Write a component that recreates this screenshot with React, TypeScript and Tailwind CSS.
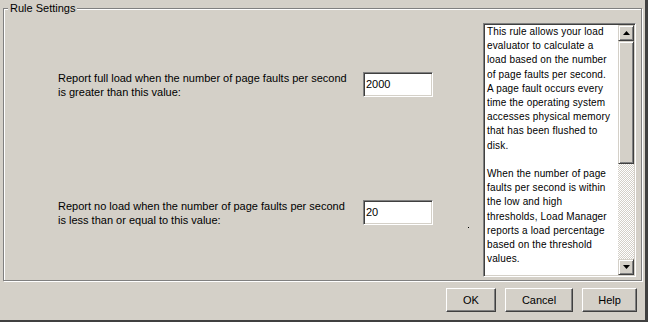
import React from "react";

const helpLines1 = [
  "This rule allows your load",
  "evaluator to calculate a",
  "load based on the number",
  "of page faults per second.",
  "A page fault occurs every",
  "time the operating system",
  "accesses physical memory",
  "that has been flushed to",
  "disk.",
];
const helpLines2 = [
  "When the number of page",
  "faults per second is within",
  "the low and high",
  "thresholds, Load Manager",
  "reports a load percentage",
  "based on the threshold",
  "values.",
];

function ScrollBtn({ up }: { up: boolean }) {
  return (
    <div className="w-[16px] h-[16px] bg-[#d4d0c8] border border-t-[#d4d0c8] border-l-[#d4d0c8] border-r-[#404040] border-b-[#404040] shadow-[inset_1px_1px_0_#fff,inset_-1px_-1px_0_#808080] flex items-center justify-center shrink-0">
      <svg width="7" height="4" viewBox="0 0 7 4">
        {up ? (
          <polygon points="3.5,0 7,4 0,4" fill="#000" />
        ) : (
          <polygon points="0,0 7,0 3.5,4" fill="#000" />
        )}
      </svg>
    </div>
  );
}

function Row({ lines, value, mt }: { lines: string[]; value: string; mt: string }) {
  return (
    <div className={`flex items-center h-[25px] ${mt}`}>
      <div className="w-[359px] pl-[54px] text-[11px] leading-[14px] text-black whitespace-nowrap">
        {lines[0]}
        <br />
        {lines[1]}
      </div>
      <div className="w-[70px] h-[25px] bg-white border border-t-[#808080] border-l-[#808080] border-r-white border-b-white shadow-[inset_1px_1px_0_#404040,inset_-1px_-1px_0_#d4d0c8] flex items-center pl-[2px] text-[11px] text-black">
        {value}
      </div>
    </div>
  );
}

function Btn({ label, w }: { label: string; w: string }) {
  return (
    <div className={`${w} h-[24px] bg-[#d4d0c8] border border-t-white border-l-white border-r-[#404040] border-b-[#404040] shadow-[inset_-1px_-1px_0_#808080] flex items-center justify-center text-[11px] text-black`}>
      {label}
    </div>
  );
}

export default function App() {
  return (
    <div className="w-[648px] h-[322px] bg-[#d4d0c8] border-r-[3px] border-b-2 border-r-[#404040] border-b-[#404040] font-['Liberation_Sans',Arial,sans-serif] flex flex-col relative overflow-hidden">
      <div className="ml-[3px] mt-[8px] w-[639px] h-[273px] border border-[#808080] shadow-[inset_1px_1px_0_#fff,1px_1px_0_#fff] relative flex">
        <span className="absolute left-[4px] top-[-7px] px-[2px] bg-[#d4d0c8] text-[11px] leading-[13px] text-black">
          Rule Settings
        </span>
        <div className="flex-1 flex flex-col">
          <Row
            mt="mt-[63px]"
            value="2000"
            lines={[
              "Report full load when the number of page faults per second",
              "is greater than this value:",
            ]}
          />
          <Row
            mt="mt-[103px]"
            value="20"
            lines={[
              "Report no load when the number of page faults per second",
              "is less than or equal to this value:",
            ]}
          />
        </div>
        <div className="mt-[14px] mr-[5px] w-[153px] h-[254px] bg-white border border-t-[#808080] border-l-[#808080] border-r-white border-b-white shadow-[inset_1px_1px_0_#404040,inset_-1px_-1px_0_#d4d0c8] p-[1px] flex">
          <div className="flex-1 pl-[2px] text-[10px] leading-[14.2px] tracking-[0.15px] text-black whitespace-nowrap overflow-hidden">
            {helpLines1.map((l) => (
              <div key={l}>{l}</div>
            ))}
            <div>&nbsp;</div>
            {helpLines2.map((l) => (
              <div key={l}>{l}</div>
            ))}
          </div>
          <div className="w-[16px] flex flex-col">
            <ScrollBtn up />
            <div className="h-[123px] bg-[#d4d0c8] border border-t-[#d4d0c8] border-l-[#d4d0c8] border-r-[#404040] border-b-[#404040] shadow-[inset_1px_1px_0_#fff,inset_-1px_-1px_0_#808080] shrink-0" />
            <div className="flex-1 bg-[repeating-conic-gradient(#d4d0c8_0_25%,#ffffff_0_50%)] bg-[length:2px_2px]" />
            <ScrollBtn up={false} />
          </div>
        </div>
        <span className="absolute left-[464px] top-[218px] w-[1px] h-[1px] bg-black" />
      </div>
      <div className="flex justify-end gap-[9px] mt-[7px] mr-[8px]">
        <Btn label="OK" w="w-[50px]" />
        <Btn label="Cancel" w="w-[68px]" />
        <Btn label="Help" w="w-[55px]" />
      </div>
    </div>
  );
}
